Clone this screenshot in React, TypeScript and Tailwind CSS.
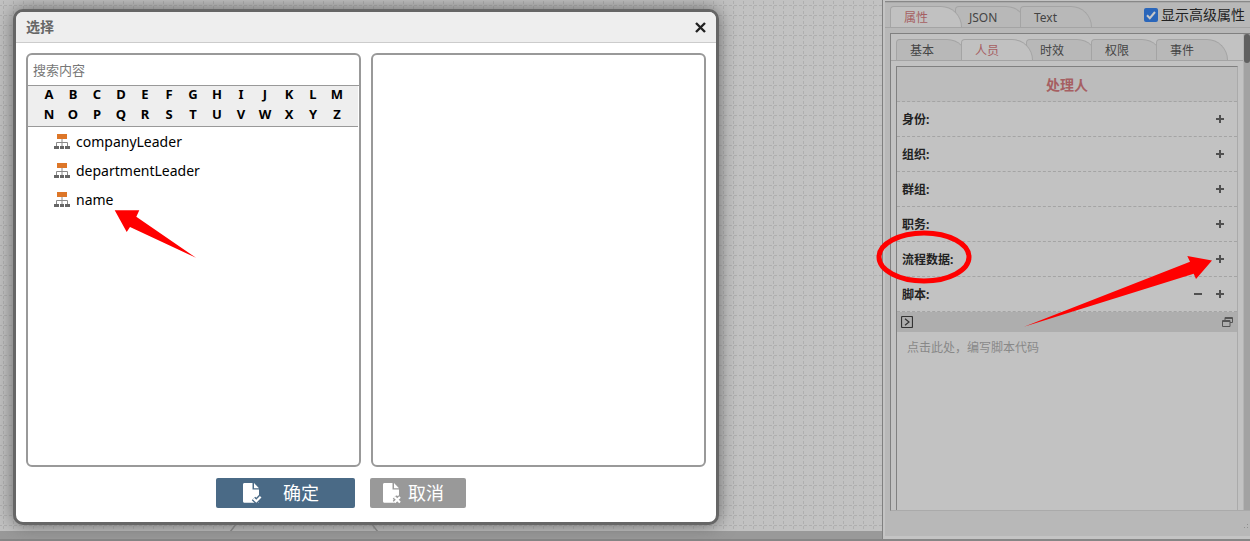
import { useState } from "react";
import clsx from "clsx";

const LETTERS = "ABCDEFGHIJKLMNOPQRSTUVWXYZ".split("");
const ITEMS = ["companyLeader", "departmentLeader", "name"];
const MAIN_TABS = ["属性", "JSON", "Text"];
const SUB_TABS = ["基本", "人员", "时效", "权限", "事件"];
const ROWS = ["身份:", "组织:", "群组:", "职务:", "流程数据:", "脚本:"];

// icons
function OrgIcon() {
  return (
    <svg width="16" height="16" viewBox="0 0 16 16" className="shrink-0">
      <path d="M3 0h10v5H3z" fill="#dd7628" />
      <path d="M8 5v7M2.5 12V8.500h11V12" fill="none" stroke="#8a8a8a" />
      <path d="M0 12h5v3H0zM6 12h4v3H6zM11 12h5v3h-5z" fill="#666" />
    </svg>
  );
}

function FileIcon({ type }: { type: "ok" | "cancel" }) {
  const hole = type === "ok" ? "#4a6a86" : "#999";
  const mark =
    type === "ok"
      ? "M10.500 16.500l2.800 2.700 4.400-4.400"
      : "M11.500 15l5.500 5.500M17 15l-5.500 5.500";

  return (
    <svg width="20" height="22" viewBox="0 0 20 22" fill="none" className="shrink-0">
      <path
        d="M1.500 1h8v6.500h6.500v13.200H1.500C.6 20.700 0 20.100 0 19.200V2.500C0 1.600.6 1 1.500 1z"
        fill="#fff"
      />
      <path d="M11 1l5 5.200h-5z" fill="#fff" />
      <path d={mark} stroke={hole} strokeWidth="5" />
      <path d={mark} stroke="#fff" strokeWidth="2.200" />
    </svg>
  );
}

function PlusIcon({ minus = false }: { minus?: boolean }) {
  return (
    <svg width="8" height="8" viewBox="0 0 8 8">
      <path d="M0 3h8v2H0z" fill="#505050" />
      {!minus && <path d="M3 0h2v8H3z" fill="#505050" />}
    </svg>
  );
}

// 画布背景网格
function Canvas() {
  return (
    <svg className="block w-full h-full" aria-hidden="true">
      <defs>
        <pattern id="grid" width="10" height="10" patternUnits="userSpaceOnUse">
          <path d="M3.500 0v10" stroke="#afafaf" strokeDasharray="3 2" strokeDashoffset="4" />
          <path d="M0 5.500h10" stroke="#afafaf" strokeDasharray="3 2" strokeDashoffset="1" />
        </pattern>
      </defs>
      <rect width="100%" height="100%" fill="url(#grid)" />
      <path d="M247 510l-17 22M361 510l17 22" fill="none" stroke="#888" strokeWidth="1.500" />
    </svg>
  );
}

function SelectDialog() {
  const [keyword, setKeyword] = useState("");

  return (
    <div
      role="dialog"
      aria-label="选择"
      className="absolute left-[13px] top-[9px] bottom-4 w-[706px] flex flex-col bg-white border-3 border-[#666] rounded-[10px] shadow-[0_0_18px_#666]"
    >
      <div className="flex items-center justify-between h-[31px] px-[10px] bg-[#eee] border-b border-[#ccc] rounded-t-[7px]">
        <h2 className="text-sm font-bold text-[#666]">选择</h2>
        <button type="button" aria-label="关闭">
          <svg width="11" height="11" viewBox="0 0 11 11">
            <path d="M1 1l9 9M10 1l-9 9" stroke="#222" strokeWidth="2.400" />
          </svg>
        </button>
      </div>

      <div className="flex-1 flex gap-[10px] px-[10px] pt-[10px]">
        <div className="flex-1 flex flex-col border-2 border-[#999] rounded-md">
          <input
            type="text"
            aria-label="搜索内容"
            placeholder="搜索内容"
            value={keyword}
            onChange={(e) => setKeyword(e.target.value)}
            className="h-[31px] px-[5px] text-[13px] border-b border-[#999] outline-none placeholder:text-[#777]"
          />
          <div className="grid grid-cols-[repeat(13,24px)] content-start pl-[9px] h-[41px] mr-px bg-[#eee] border-b border-[#999]">
            {LETTERS.map((letter) => (
              <button
                key={letter}
                type="button"
                className="h-5 pb-1 leading-4 text-[13px] font-bold text-black"
              >
                {letter}
              </button>
            ))}
          </div>
          <ul>
            {ITEMS.map((item) => (
              <li key={item}>
                <button
                  type="button"
                  className="flex items-center gap-[6px] h-[29px] pl-[26px] text-sm text-black"
                >
                  <OrgIcon />
                  {item}
                </button>
              </li>
            ))}
          </ul>
        </div>
        <div className="flex-1 border-2 border-[#999] rounded-md" />
      </div>

      <div className="flex justify-center gap-[15px] pt-[11px] pb-[14px] pr-[50px] text-lg text-white">
        <button
          type="button"
          className="flex items-center gap-5 w-[139px] h-[30px] pl-[27px] bg-[#4a6a86] rounded-xs"
        >
          <FileIcon type="ok" />
          确定
        </button>
        <button
          type="button"
          className="flex items-center gap-[5px] w-24 h-[30px] pl-[13px] bg-[#999] rounded-xs"
        >
          <FileIcon type="cancel" />
          取消
        </button>
      </div>

      <svg
        width="82"
        height="48"
        viewBox="0 0 82 48"
        className="absolute left-[98px] top-[198px] pointer-events-none"
      >
        <path d="M.7.300H25.300L22.300 6.700 82 47.800 16 17 12.700 22z" fill="#f00" />
      </svg>
    </div>
  );
}

function Tabs({ tabs, active }: { tabs: string[]; active: string }) {
  const [current, setCurrent] = useState(active);

  return (
    <div role="tablist" className="flex">
      {tabs.map((tab) => (
        <button
          key={tab}
          type="button"
          role="tab"
          aria-selected={tab === current}
          onClick={() => setCurrent(tab)}
          className={clsx(
            "relative w-[72px] h-[21px] -mr-[7px] pl-[13px] pt-px text-left text-xs leading-5 border border-b-0 border-[#a4a4a4] rounded-tl-[4px] rounded-tr-[22px]",
            tab === current
              ? "z-10 bg-[#c1c1c1] text-[#a65f62]"
              : "bg-[#b8b8b8] text-[#444]"
          )}
        >
          {tab}
        </button>
      ))}
    </div>
  );
}

function PropertyPanel() {
  const [advanced, setAdvanced] = useState(true);
  const [script, setScript] = useState("");

  return (
    <aside className="relative shrink-0 w-[368px] flex flex-col bg-[#b8b8b8] border-l border-[#808080]">
      <div className="flex-1 flex flex-col border-l-2 border-b-3 border-[#c4c4c4]">
        <div className="h-[3px] bg-[#c4c4c4] border-t border-b border-t-[#c4c4c4] border-b-[#aaa]">
          <div className="h-px bg-[#888]" />
        </div>
        <div className="flex items-end justify-between h-[25px] pl-[5px] border-b border-[#a4a4a4]">
          <Tabs tabs={MAIN_TABS} active="属性" />
          <label className="flex items-center gap-[3px] h-6 pr-[5px] text-sm text-[#222]">
            <span className="relative">
              <input
                type="checkbox"
                checked={advanced}
                onChange={(e) => setAdvanced(e.target.checked)}
                className="peer block appearance-none size-[14px] rounded-xs border border-[#666] checked:border-0 checked:bg-[#2a66ba]"
              />
              <svg
                viewBox="0 0 14 14"
                className="absolute inset-0 hidden peer-checked:block pointer-events-none"
              >
                <path d="M3 7.300l2.800 2.900L11 4" fill="none" stroke="#c8c8c8" strokeWidth="2" />
              </svg>
            </span>
            显示高级属性
          </label>
        </div>

        <div className="flex-1 flex mt-[5px] ml-[5px] mb-[25px] bg-[#c2c2c2] border-t border-l border-b border-t-[#808080] border-l-[#808080] border-b-[#aaa]">
          <div className="flex-1 flex flex-col">
            <div className="pt-[5px] pl-[5px] border-b border-[#a4a4a4]">
              <Tabs tabs={SUB_TABS} active="人员" />
            </div>
            <div className="flex-1 flex flex-col mt-[5px] ml-[5px] mr-[5px] border-t border-l border-r border-t-[#808080] border-l-[#808080] border-r-[#aaa]">
              <h3 className="h-[35px] leading-[35px] text-center text-sm font-bold text-[#a65f62] bg-[#bcbcbc] border-b border-dashed border-[#a4a4a4]">
                处理人
              </h3>
              {ROWS.map((row) => (
                <div
                  key={row}
                  className="flex items-center justify-between h-[35px] pl-[5px] pr-[13px] border-b border-dashed border-[#a4a4a4]"
                >
                  <span className="pt-px text-xs font-bold text-[#222]">{row}</span>
                  <div className="flex gap-[14px]">
                    {row === "脚本:" && (
                      <button type="button" aria-label="删除">
                        <PlusIcon minus />
                      </button>
                    )}
                    <button type="button" aria-label="添加">
                      <PlusIcon />
                    </button>
                  </div>
                </div>
              ))}
              <div className="flex items-center justify-between h-5 px-1 bg-[#aeaeae]">
                <button type="button" aria-label="运行">
                  <svg width="12" height="12" viewBox="0 0 12 12" fill="none" stroke="#333">
                    <rect x=".5" y=".5" width="11" height="11" rx="1" strokeWidth="1.200" />
                    <path d="M4 2.800l4 3.200-4 3.200" strokeWidth="1.200" />
                  </svg>
                </button>
                <button type="button" aria-label="还原">
                  <svg width="11" height="10" viewBox="0 0 11 10" fill="none" stroke="#555">
                    <path d="M3 3V.5h7.500v5H8M3 1.500h7.500" />
                    <path d="M.5 3.500H8v6H.5zM.5 4.500H8" />
                  </svg>
                </button>
              </div>
              <textarea
                aria-label="脚本代码"
                placeholder="点击此处，编写脚本代码"
                value={script}
                onChange={(e) => setScript(e.target.value)}
                className="flex-1 pl-[10px] pt-2 text-xs leading-4 resize-none outline-none placeholder:text-[#888]"
              />
            </div>
          </div>
          <div className="w-[7px] bg-[#a2a2a2] border-l border-[#b4b4b4]">
            <div className="h-[29px] bg-[#606060] rounded-full" />
          </div>
        </div>
      </div>

      <svg
        width="8"
        height="8"
        viewBox="0 0 8 8"
        className="absolute right-0 bottom-[8px]"
        fill="#909090"
      >
        <path d="M5 1h1v1H5zM2 4h1v1H2zM5 4h1v1H5z" />
      </svg>

      {/* 标注 */}
      <svg
        width="344"
        height="104"
        viewBox="0 0 344 104"
        className="absolute -left-2 top-[228px] pointer-events-none"
      >
        <ellipse cx="49" cy="29" rx="45" ry="24" fill="none" stroke="#f00" strokeWidth="5" />
        <path
          d="M337 32.500L312.300 28l2.700 5.700L149 98.700l169.700-53 2.300 5.300z"
          fill="#f00"
        />
      </svg>
    </aside>
  );
}

function App() {
  return (
    <div className="flex flex-col h-screen overflow-hidden bg-[#c2c2c2] font-['Noto_Sans','Noto_Sans_CJK_SC',sans-serif]">
      <div className="flex-1 flex min-h-0">
        <main className="relative flex-1 flex flex-col overflow-hidden">
          <div className="flex-1 min-h-0">
            <Canvas />
          </div>
          <div className="h-2 bg-[#999]" />
        </main>
        <PropertyPanel />
      </div>
      <div className="h-[2px] bg-[#868686]" />
      <SelectDialog />
    </div>
  );
}

export default App;
